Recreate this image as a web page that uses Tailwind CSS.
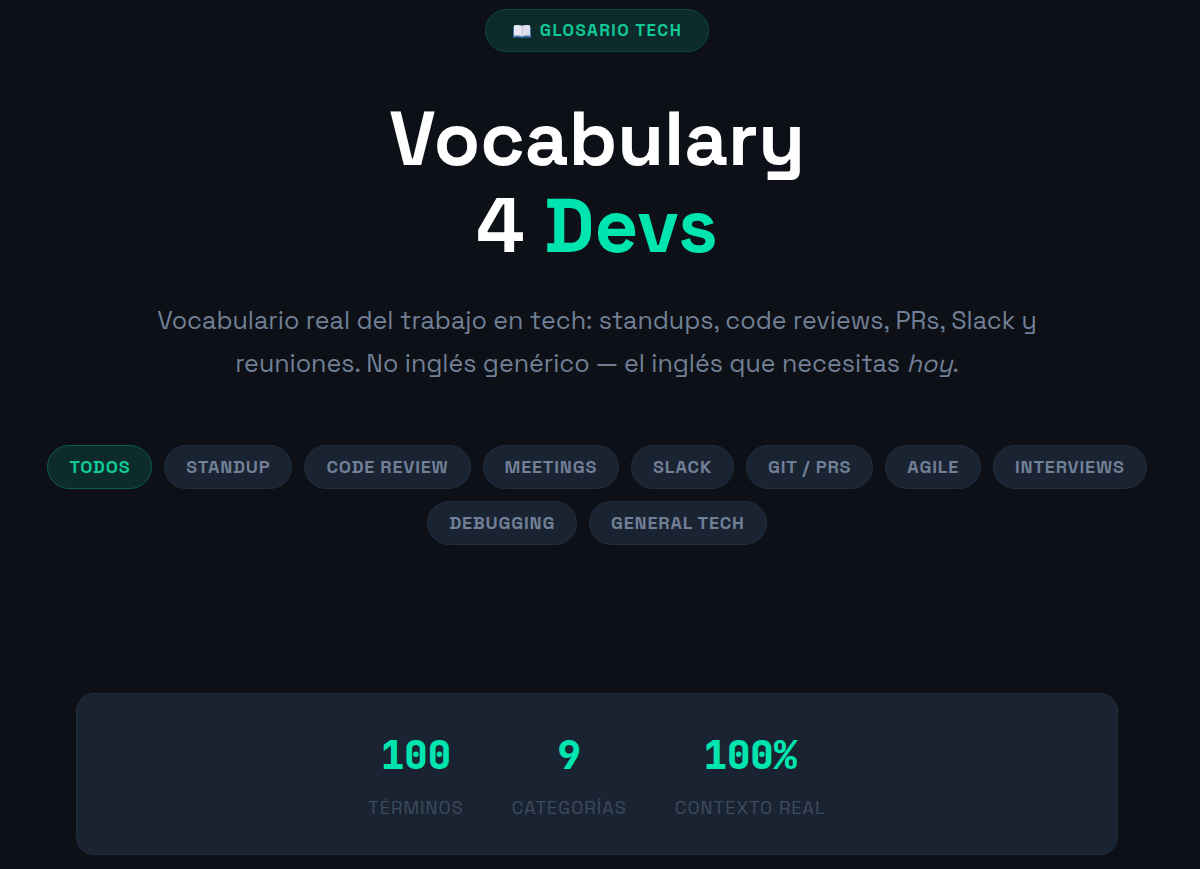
<!DOCTYPE html>
<html lang="es">
<head>
    <meta charset="UTF-8">
    <meta name="viewport" content="width=device-width, initial-scale=1.0">
    <title>Vocabulary 4 Devs</title>
    <script src="https://cdn.jsdelivr.net/npm/@tailwindcss/browser@4"></script>
</head>
<body class="min-h-screen bg-[#0d1017] pr-1.5 font-['Space_Grotesk',Inter,sans-serif] text-white">

    <!-- Hero -->
    <header class="flex flex-col items-center px-6 pt-[9px] text-center">
        <div class="flex h-[43px] items-center gap-2 rounded-full border border-[#0d4a3e] bg-[#0c2b2a] px-[26px] text-[17px] font-bold tracking-[0.08em] text-[#10c997]">
            <svg class="h-4 w-5" viewBox="0 0 20 16" aria-hidden="true">
                <path d="M1 3.5h18v11h-7.5l-1.5.8-1.5-.8H1z" fill="#3f74ad"/>
                <path d="M2 2.5c3-.6 6-.5 8 .3v10.4c-2-.8-5-.9-8-.4z" fill="#e9e8f2"/>
                <path d="M18 2.5c-3-.6-6-.5-8 .3v10.4c2-.8 5-.9 8-.4z" fill="#dcdeed"/>
                <path d="M10 2.8v10.4" stroke="#c3c5d6" stroke-width="1"/>
            </svg>
            GLOSARIO TECH
        </div>

        <h1 class="mt-[43px] text-[76px] leading-[87px] font-bold">
            Vocabulary<br>
            4 <span class="text-[#00e5b0]">Devs</span>
        </h1>

        <p class="mt-[30px] max-w-[920px] text-[25px] leading-[43px] text-[#718096]">
            Vocabulario real del trabajo en tech: standups, code reviews, PRs, Slack y
            reuniones. No inglés genérico — el inglés que necesitas <em>hoy</em>.
        </p>
    </header>

    <!-- Filtros -->
    <nav class="mx-auto mt-[60px] flex max-w-[1150px] flex-wrap justify-center gap-3 text-lg font-semibold tracking-[0.045em] text-[#718096]">
        <button class="h-11 rounded-full border border-[#0d5a48] bg-[#0c2b2a] px-[21px] font-bold text-[#10c997]">TODOS</button>
        <button class="h-11 rounded-full border border-[#222d3a] bg-[#1a2332] px-[21px]">STANDUP</button>
        <button class="h-11 rounded-full border border-[#222d3a] bg-[#1a2332] px-[21px]">CODE REVIEW</button>
        <button class="h-11 rounded-full border border-[#222d3a] bg-[#1a2332] px-[21px]">MEETINGS</button>
        <button class="h-11 rounded-full border border-[#222d3a] bg-[#1a2332] px-[21px]">SLACK</button>
        <button class="h-11 rounded-full border border-[#222d3a] bg-[#1a2332] px-[21px]">GIT / PRS</button>
        <button class="h-11 rounded-full border border-[#222d3a] bg-[#1a2332] px-[21px]">AGILE</button>
        <button class="h-11 rounded-full border border-[#222d3a] bg-[#1a2332] px-[21px]">INTERVIEWS</button>
        <button class="h-11 rounded-full border border-[#222d3a] bg-[#1a2332] px-[21px]">DEBUGGING</button>
        <button class="h-11 rounded-full border border-[#222d3a] bg-[#1a2332] px-[21px]">GENERAL TECH</button>
    </nav>

    <!-- Estadísticas -->
    <section class="mx-[76px] mt-[148px] flex flex-wrap justify-center gap-12 rounded-[18px] border border-[#222d3a] bg-[#1a2332] pt-9 pb-8 text-center">
        <div>
            <div class="font-['JetBrains_Mono','DejaVu_Sans_Mono',monospace] text-[39px] leading-[50px] font-extrabold text-[#00e5b0]">100</div>
            <div class="mt-3.5 text-lg leading-7 tracking-[0.06em] text-[#3d4b5c]">TÉRMINOS</div>
        </div>
        <div>
            <div class="font-['JetBrains_Mono','DejaVu_Sans_Mono',monospace] text-[39px] leading-[50px] font-extrabold text-[#00e5b0]">9</div>
            <div class="mt-3.5 text-lg leading-7 tracking-[0.06em] text-[#3d4b5c]">CATEGORÍAS</div>
        </div>
        <div>
            <div class="font-['JetBrains_Mono','DejaVu_Sans_Mono',monospace] text-[39px] leading-[50px] font-extrabold text-[#00e5b0]">100%</div>
            <div class="mt-3.5 text-lg leading-7 tracking-[0.06em] text-[#3d4b5c]">CONTEXTO REAL</div>
        </div>
    </section>

</body>
</html>
